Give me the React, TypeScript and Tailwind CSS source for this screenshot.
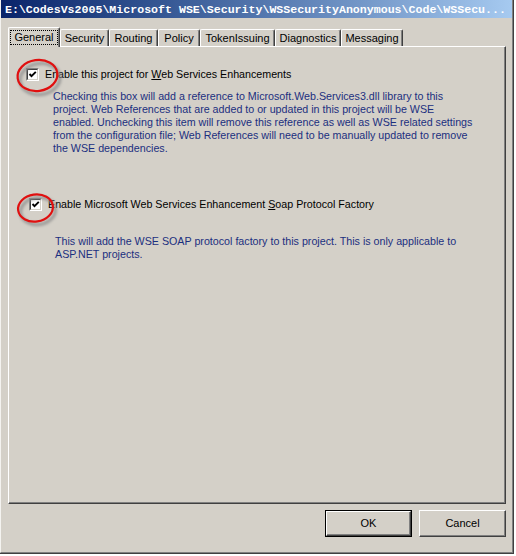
import React from 'react';

const TABS = [
  { label: 'General', w: 'w-[52px]', active: true },
  { label: 'Security', w: 'w-[49px]' },
  { label: 'Routing', w: 'w-[49px]' },
  { label: 'Policy', w: 'w-[42px]' },
  { label: 'TokenIssuing', w: 'w-[75px]' },
  { label: 'Diagnostics', w: 'w-[66px]' },
  { label: 'Messaging', w: 'w-[62px]' },
];

const Check: React.FC = () => (
  <div className="w-[13px] h-[13px] border border-t-[#808080] border-l-[#808080] border-b-white border-r-white shrink-0">
    <div className="w-full h-full bg-white border border-t-[#404040] border-l-[#404040] border-b-[#d4d0c8] border-r-[#d4d0c8] flex items-center justify-center">
      <svg width="9" height="9" viewBox="0 0 9 9">
        <polyline points="1.5,4 3.5,6.2 7.8,1.8" fill="none" stroke="#000" strokeWidth="1.9" />
      </svg>
    </div>
  </div>
);

const Btn: React.FC<{ label: string; isDefault?: boolean }> = ({ label, isDefault }) => (
  <div className={`w-[87px] h-[27px] ${isDefault ? 'border border-black' : ''}`}>
    <div className="w-full h-full border border-t-white border-l-white border-r-[#404040] border-b-[#404040] shadow-[inset_-1px_-1px_0_#808080] flex items-center justify-center text-[11px] text-black">
      {label}
    </div>
  </div>
);

export default function App() {
  return (
    <div className="w-[516px] h-[556px] bg-white font-[Tahoma,'Liberation_Sans',sans-serif] text-[10.7px] leading-[13px]">
      <div className="w-[514px] h-[554px] border-r border-b border-[#404040]">
        <div className="w-full h-full border-r border-b border-[#808080] border-l border-l-[#f4f3f0] bg-[#d4d0c8] flex flex-col">
          {/* Title bar */}
          <div className="h-[18px] bg-gradient-to-r from-[#0a246a] to-[#a6caf0] flex items-center pl-[4px] overflow-hidden">
            <span className="text-white font-bold font-['Liberation_Mono',monospace] text-[11.6px] whitespace-nowrap">
              E:\CodesVs2005\Microsoft WSE\Security\WSSecurityAnonymous\Code\WSSecu...
            </span>
          </div>

          <div className="flex flex-col pl-[7px] pr-[6px] pt-[9px]">
            {/* Tabs */}
            <div className="flex items-end h-[19px] relative z-10 text-[11px]">
              {TABS.map((t) => (
                <div
                  key={t.label}
                  className={
                    t.active
                      ? `${t.w} h-[20px] -mb-[1px] bg-[#d4d0c8] border-t border-l border-white border-r border-r-[#404040] shadow-[inset_-1px_0_0_#808080] rounded-t-[2px] flex items-start justify-center pt-[2px]`
                      : `${t.w} h-[17px] border-t border-l border-white border-r border-r-[#404040] shadow-[inset_-1px_0_0_#808080] rounded-t-[2px] flex items-center justify-center`
                  }
                >
                  {t.active ? (
                    <span className="border border-dotted border-black px-[3px] leading-[13px]">{t.label}</span>
                  ) : (
                    <span>{t.label}</span>
                  )}
                </div>
              ))}
            </div>

            {/* Panel */}
            <div className="relative h-[458px] border border-t-white border-l-white border-r-[#404040] border-b-[#404040] shadow-[inset_-1px_-1px_0_#808080] pt-[21px]">
              <div className="flex items-center gap-[6px] ml-[17px] text-black">
                <Check />
                <span>
                  Enable this project for <u>W</u>eb Services Enhancements
                </span>
              </div>
              <div className="ml-[44px] mt-[9px] text-[#1b2f7f]">
                Checking this box will add a reference to Microsoft.Web.Services3.dll library to this
                <br />
                project. Web References that are added to or updated in this project will be WSE
                <br />
                enabled. Unchecking this item will remove this reference as well as WSE related settings
                <br />
                from the configuration file; Web References will need to be manually updated to remove
                <br />
                the WSE dependencies.
              </div>

              <div className="flex items-center gap-[6px] ml-[20px] mt-[43px] text-black">
                <Check />
                <span>
                  Enable Microsoft Web Services Enhancement <u>S</u>oap Protocol Factory
                </span>
              </div>
              <div className="ml-[46px] mt-[24px] text-[#1b2f7f]">
                This will add the WSE SOAP protocol factory to this project. This is only applicable to
                <br />
                ASP.NET projects.
              </div>

              {/* red annotation circles */}
              <svg className="absolute inset-0 pointer-events-none" width="497" height="458">
                <defs>
                  <filter id="sh" x="-30%" y="-30%" width="160%" height="160%">
                    <feGaussianBlur stdDeviation="1.5" />
                  </filter>
                </defs>
                <ellipse cx="31" cy="32" rx="20" ry="15.5" fill="none" stroke="#8a8a8a" strokeWidth="2.5" filter="url(#sh)" transform="rotate(-8 31 32)" />
                <ellipse cx="28.5" cy="28.5" rx="20" ry="15.5" fill="none" stroke="#e01010" strokeWidth="2.2" transform="rotate(-8 28.5 28.5)" />
                <ellipse cx="29" cy="164" rx="17.5" ry="13.5" fill="none" stroke="#8a8a8a" strokeWidth="2.5" filter="url(#sh)" transform="rotate(-8 29 164)" />
                <ellipse cx="26.5" cy="161" rx="17.5" ry="13.5" fill="none" stroke="#e01010" strokeWidth="2.2" transform="rotate(-8 26.5 161)" />
              </svg>
            </div>

            {/* Buttons */}
            <div className="flex justify-end gap-[7px] mt-[6px]">
              <Btn label="OK" isDefault />
              <Btn label="Cancel" />
            </div>
          </div>
        </div>
      </div>
    </div>
  );
}
